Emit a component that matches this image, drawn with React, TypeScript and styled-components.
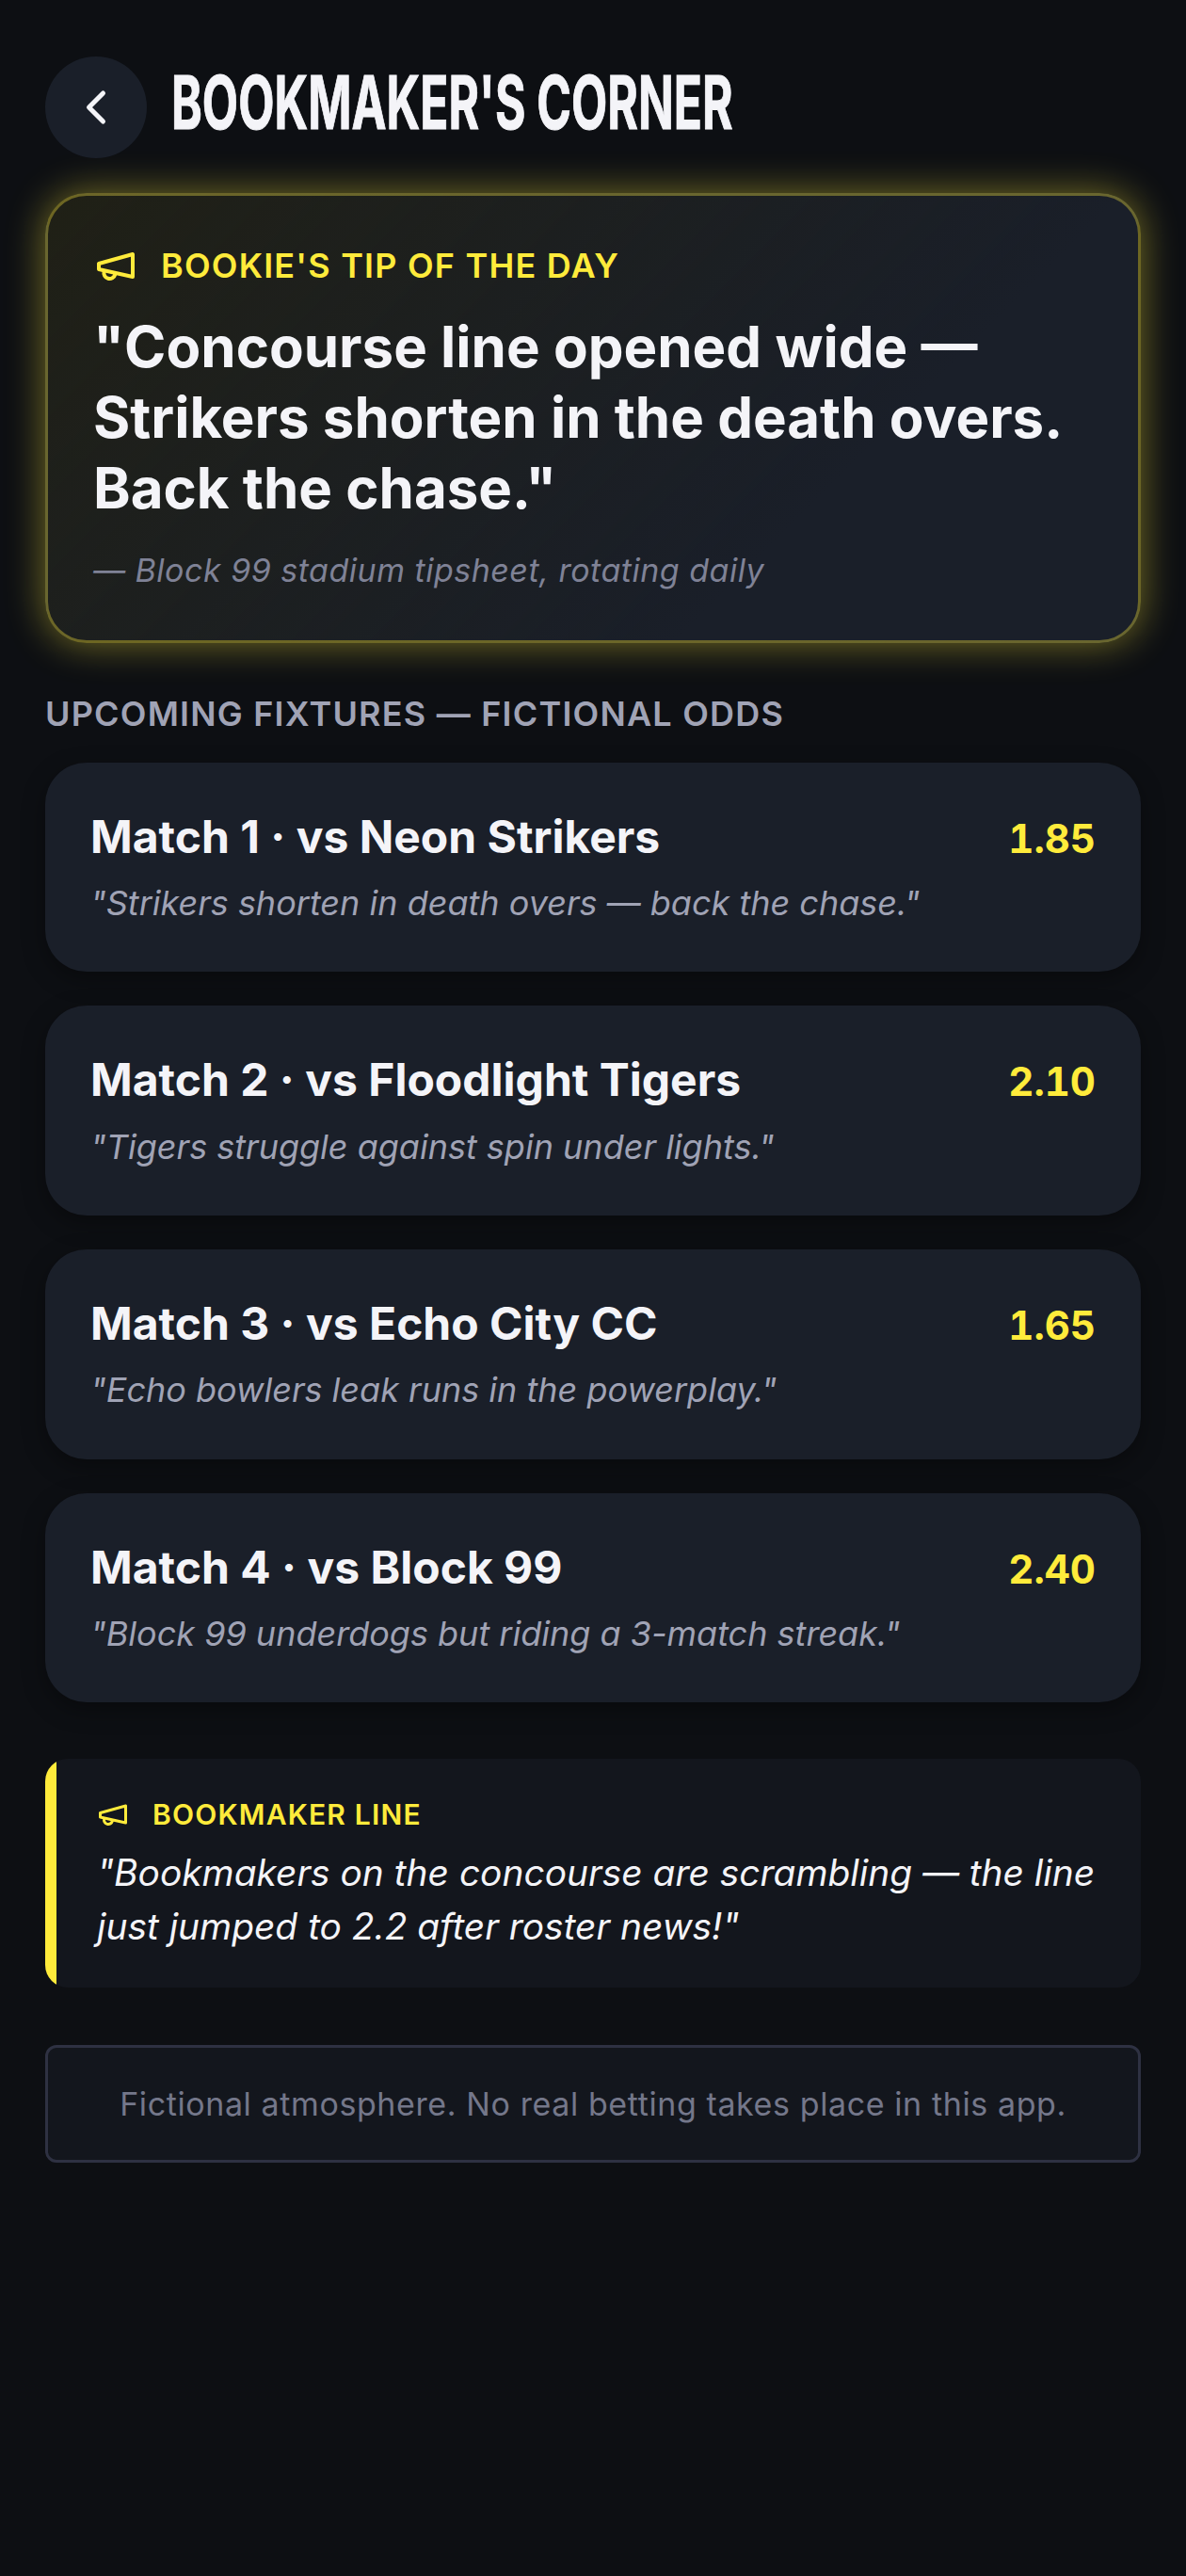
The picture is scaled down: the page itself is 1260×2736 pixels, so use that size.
import * as React from 'react';
import styled, { createGlobalStyle } from 'styled-components';

const GlobalStyle = createGlobalStyle`
	html, body {
		margin: 0;
		padding: 0;
		background: #0d0f13;
	}
	* {
		box-sizing: border-box;
	}
`;

const Page = styled.div`
	width: 1260px;
	height: 2736px;
	padding: 60px 48px;
	background: #0d0f13;
	font-family: Inter, "Liberation Sans", sans-serif;
	color: #f4f4f8;
`;

const Header = styled.header`
	display: flex;
	align-items: center;
	gap: 26px;
	margin-bottom: 37px;
`;

const BackButton = styled.button`
	display: flex;
	align-items: center;
	justify-content: center;
	width: 108px;
	height: 108px;
	padding: 0;
	border: 0;
	border-radius: 50%;
	background: #1a1f29;
	color: #f4f4f8;
`;

// no Bebas Neue on this machine, so a heavy sans squeezed sideways stands in
const Title = styled.h1`
	margin: 0 0 11px;
	font-family: Inter, "Liberation Sans", sans-serif;
	font-size: 78px;
	line-height: 1;
	font-weight: 700;
	white-space: nowrap;
	color: #f4f4f8;
	-webkit-text-stroke: 1px #f4f4f8;
	transform: scaleX(0.637);
	transform-origin: left center;
`;

const HeroCard = styled.section`
	padding: 49.5px 48px 50px;
	margin-bottom: 53px;
	border: 3px solid rgba(255, 235, 59, 0.35);
	border-radius: 44px;
	background: linear-gradient(135deg, rgba(255, 235, 59, 0.08), #1a1f29 70%);
	box-shadow: 0 0 40px rgba(255, 235, 59, 0.45);
`;

const Eyebrow = styled.div<{ $small?: boolean }>`
	display: flex;
	align-items: center;
	gap: 24px;
	font-size: ${props => props.$small ? '30px' : '36px'};
	font-weight: 600;
	letter-spacing: 1.2px;
	line-height: 36px;
	color: #ffeb3b;
`;

const TipQuote = styled.p`
	margin: 25.5px 0 26px;
	font-size: 60px;
	line-height: 75px;
	font-weight: 700;
	color: #f4f4f8;
`;

const TipSource = styled.p`
	margin: 0;
	font-size: 34px;
	line-height: 1.4;
	letter-spacing: 0.5px;
	font-style: italic;
	color: #7f8296;
`;

const SectionHeading = styled.h2`
	margin: 0 0 30px;
	font-size: 36px;
	line-height: 44px;
	font-weight: 600;
	letter-spacing: 1.2px;
	color: #a0a3b5;
`;

const FixtureList = styled.div`
	display: flex;
	flex-direction: column;
	gap: 36px;
	margin-bottom: 60px;
`;

const FixtureCard = styled.article`
	padding: 49px 48px 46.17px;
	border-radius: 44px;
	background: #1a1f29;
	box-shadow: 0 8px 24px rgba(0, 0, 0, 0.35);
`;

const FixtureTop = styled.div`
	display: flex;
	align-items: center;
	justify-content: space-between;
	margin-bottom: 13.5px;
`;

const FixtureName = styled.div`
	font-size: 48px;
	line-height: 60px;
	font-weight: 700;
	color: #f4f4f8;
`;

const Odds = styled.div`
	padding-top: 4px;
	font-size: 42px;
	line-height: 56px;
	font-weight: 700;
	font-variant-numeric: tabular-nums;
	color: #ffeb3b;
`;

const FixtureNote = styled.div`
	font-size: 36px;
	line-height: 54px;
	font-style: italic;
	color: #a0a3b5;
`;

const LineCard = styled.section`
	position: relative;
	overflow: hidden;
	padding: 41px 40px 36.6px 54px;
	margin-bottom: 61px;
	border-radius: 24px;
	background: #13161d;

	&::before {
		content: '';
		position: absolute;
		left: 0;
		top: 0;
		bottom: 0;
		width: 12px;
		background: #ffeb3b;
	}
`;

const LineQuote = styled.p`
	margin: 16px 0 0 1px;
	font-size: 38.9px;
	line-height: 56.7px;
	font-style: italic;
	color: #f4f4f8;
`;

const Disclaimer = styled.div`
	padding: 36px 35px 35px;
	border: 3px solid #2e3142;
	border-radius: 12px;
	background: #13161d;
	font-size: 34px;
	line-height: 48px;
	letter-spacing: 0.6px;
	text-align: center;
	color: #74778a;
`;

function MegaphoneIcon(props: { size: number }) {
	return (
		<svg width={props.size} height={props.size} viewBox="0 0 24 24" fill="none" stroke="currentColor" strokeWidth="2" strokeLinecap="round" strokeLinejoin="round">
			<path d="m3 11 18-5v12L3 14v-3z" />
			<path d="M11.6 16.8a3 3 0 1 1-5.8-1.6" />
		</svg>
	);
}

const fixtures = [
	{ name: 'Match 1 · vs Neon Strikers', odds: '1.85', note: '"Strikers shorten in death overs — back the chase."' },
	{ name: 'Match 2 · vs Floodlight Tigers', odds: '2.10', note: '"Tigers struggle against spin under lights."' },
	{ name: 'Match 3 · vs Echo City CC', odds: '1.65', note: '"Echo bowlers leak runs in the powerplay."' },
	{ name: 'Match 4 · vs Block 99', odds: '2.40', note: '"Block 99 underdogs but riding a 3-match streak."' },
];

export default function App() {
	return (
		<Page>
			<GlobalStyle />
			<Header>
				<BackButton aria-label="Back">
					<svg width="60" height="60" viewBox="0 0 24 24" fill="none" stroke="currentColor" strokeWidth="2" strokeLinecap="round" strokeLinejoin="round">
						<path d="m15 18-6-6 6-6" />
					</svg>
				</BackButton>
				<Title>BOOKMAKER'S CORNER</Title>
			</Header>
			<HeroCard>
				<Eyebrow><MegaphoneIcon size={48} />BOOKIE'S TIP OF THE DAY</Eyebrow>
				<TipQuote>"Concourse line opened wide — Strikers shorten in the death overs. Back the chase."</TipQuote>
				<TipSource>— Block 99 stadium tipsheet, rotating daily</TipSource>
			</HeroCard>
			<SectionHeading>UPCOMING FIXTURES — FICTIONAL ODDS</SectionHeading>
			<FixtureList>
				{fixtures.map(f => (
					<FixtureCard key={f.name}>
						<FixtureTop>
							<FixtureName>{f.name}</FixtureName>
							<Odds>{f.odds}</Odds>
						</FixtureTop>
						<FixtureNote>{f.note}</FixtureNote>
					</FixtureCard>
				))}
			</FixtureList>
			<LineCard>
				<Eyebrow $small><MegaphoneIcon size={36} />BOOKMAKER LINE</Eyebrow>
				<LineQuote>"Bookmakers on the concourse are scrambling — the line just jumped to 2.2 after roster news!"</LineQuote>
			</LineCard>
			<Disclaimer>Fictional atmosphere. No real betting takes place in this app.</Disclaimer>
		</Page>
	);
}
